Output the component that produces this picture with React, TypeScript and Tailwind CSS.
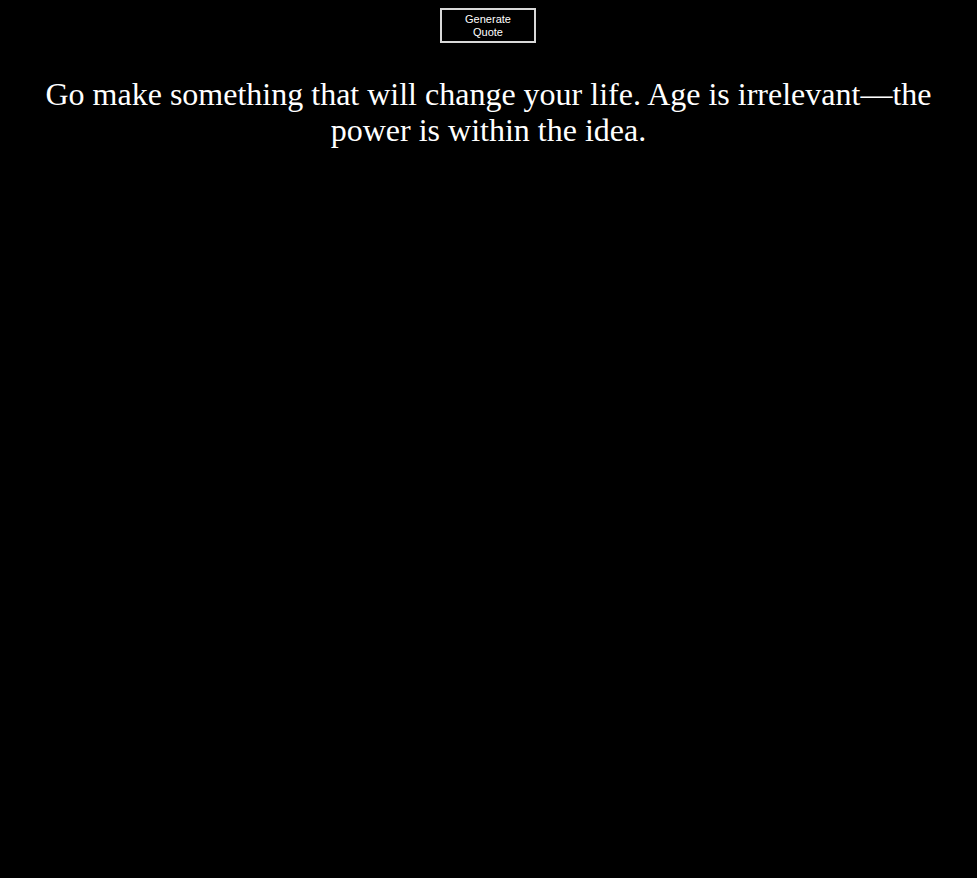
export default function App() {
  return (
    <div className="min-h-screen bg-black text-white flex flex-col items-center pt-2">
      <button className="w-[96px] h-[35px] mr-px border-2 border-[#d9d9d9] bg-black text-white text-[11px] leading-[13px] font-['Liberation_Sans',Arial,sans-serif] font-medium px-4">
        Generate Quote
      </button>
      <h1 className="mt-[33px] px-8 text-center text-[32px] leading-[36px] font-['Liberation_Serif','Times_New_Roman',serif] font-normal">
        Go make something that will change your life. Age is irrelevant—the power is within the idea.
      </h1>
    </div>
  );
}
